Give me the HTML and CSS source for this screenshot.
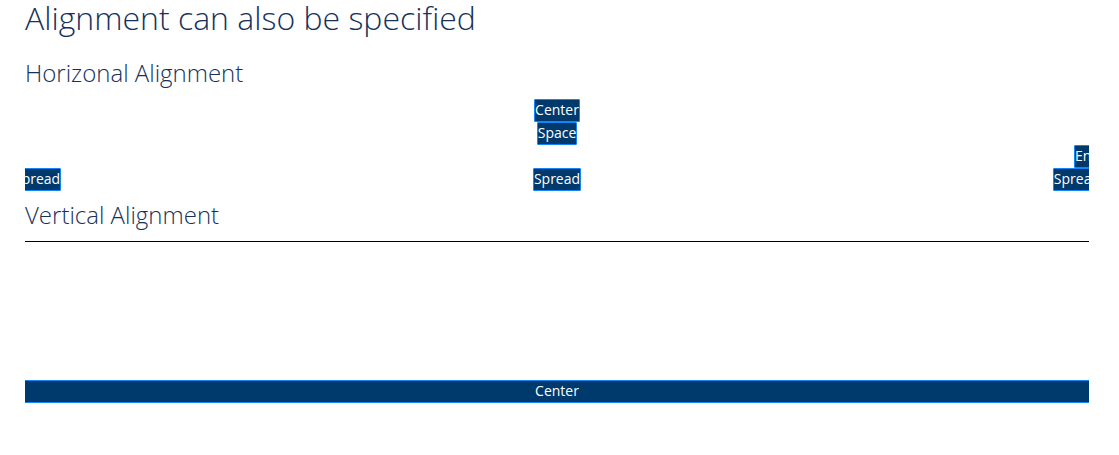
FILE: index.html
```html
<!DOCTYPE html>
<html lang="en">
<head>
<meta charset="utf-8">
<title>Alignment</title>
<link rel="stylesheet" href="styles.css">
</head>
<body>
<main class="page">
  <h1 class="title">Alignment can also be specified</h1>
  <h2 class="heading">Horizonal Alignment</h2>
  <section class="rows">
    <div class="grid grid-center"><div class="box">Center</div></div>
    <div class="grid grid-space"><div class="box">Space</div></div>
    <div class="grid grid-end"><div class="box">End</div></div>
    <div class="grid grid-spread"><div class="box">Spread</div><div class="box">Spread</div><div class="box">Spread</div></div>
  </section>
  <h2 class="heading">Vertical Alignment</h2>
  <section class="vertical">
    <div class="box">Center</div>
  </section>
</main>
</body>
</html>
```
FILE: styles.css
```css
* { box-sizing: border-box; }
body {
  margin: 0;
  background: #fff;
  color: #16325c;
  font-family: "Open Sans", "Noto Sans", sans-serif;
}
.page { padding: 0 30px 0 25px; }
.title {
  margin: 0;
  font-size: 32px;
  font-weight: 300;
  line-height: 36px;
}
.heading {
  margin: 0;
  font-size: 24px;
  font-weight: 300;
  line-height: 32px;
}
.title + .heading { margin: 21px 0 10px; }
.rows { overflow: hidden; }
.rows + .heading { margin: 8px 0 10px; }
.grid {
  display: flex;
  margin: 0 -12px;
}
.grid-center { justify-content: center; }
.grid-space { justify-content: space-around; }
.grid-end { justify-content: flex-end; }
.grid-spread { justify-content: space-between; }
.box {
  padding-bottom: 2px;
  border: 1px solid #1585f5;
  border-radius: 1px;
  background: #00396b;
  color: #fff;
  font-size: 14px;
  font-weight: 500;
  line-height: 19px;
  text-align: center;
}
.vertical {
  padding: 138px 0 50px;
  border-top: 1px solid #000;
  overflow: hidden;
}
.vertical .box { margin: 0 -12px; }
```
